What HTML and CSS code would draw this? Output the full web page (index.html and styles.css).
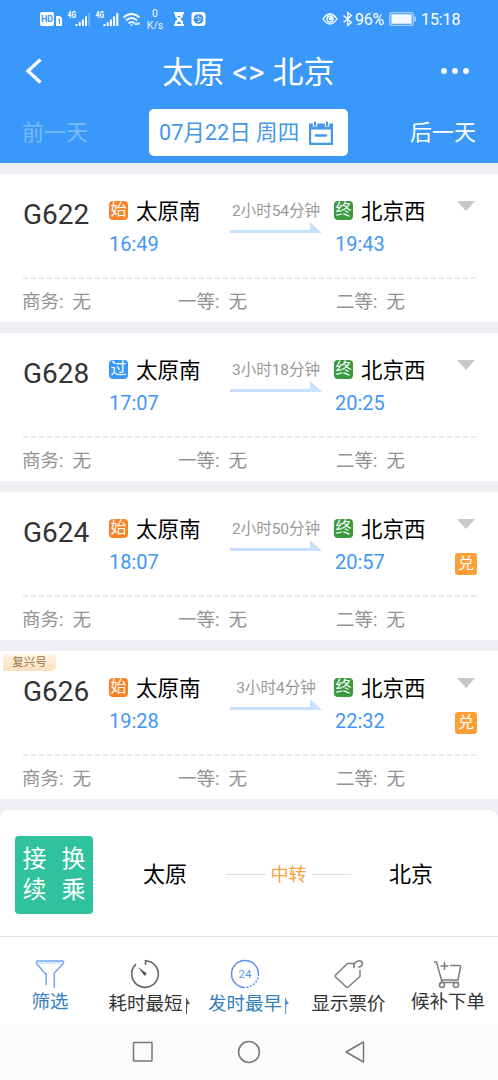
FILE: index.html
```
<!DOCTYPE html>
<html lang="zh-CN">
<head>
<meta charset="utf-8">
<title>太原 - 北京</title>
<link rel="stylesheet" href="styles.css">
</head>
<body>
<header class="top">
  <div class="status">
    <svg class="status-icons" width="108" height="24" viewBox="0 0 108 24" fill="#fff">
      <rect x="0" y="5" width="14" height="14" rx="2"/>
      <text x="1" y="15.3" class="hd-label">HD</text>
      <path d="M16 9h4l2 2v8h-6zM18 12v1h1v4h1v-5z" fill-rule="evenodd"/>
      <text x="27.500" y="11" class="net-label" textLength="8.500" lengthAdjust="spacingAndGlyphs">4G</text>
      <path d="M35.500 17h2v2h-2zM38.700 15h2v4h-2zM41.900 12.500h2v6.500h-2zM45 9.500h2v9.500h-2z"/>
      <path d="M48.300 6h1.500v13h-1.500z" opacity=".35"/>
      <text x="55.500" y="11" class="net-label" textLength="8.500" lengthAdjust="spacingAndGlyphs">4G</text>
      <path d="M63.500 17h2v2h-2zM66.700 15h2v4h-2zM69.900 12.500h2v6.500h-2zM73.100 9.500h2v9.500h-2zM76.300 6h2v13h-2z"/>
      <g fill="none" stroke="#fff" stroke-width="1.700"><path d="M83.500 10.500q8-7 16 0M86 13.500q5.500-5 11 0M88.500 16.300q3-2.500 6 0"/></g>
      <path d="M90 17.500h3l-1.500 1.800zM94.500 18l1.500-3 1.500 3zM97 15.500h3l-1.500 3z"/>
    </svg>
    <div class="speed"><span>0</span><span>K/s</span></div>
    <svg class="status-apps" width="34" height="16" viewBox="0 0 34 16" fill="#fff">
      <path d="M1 1h10v2h-1v2.500L7.500 8 10 10.500V13h1v2H1v-2h1v-2.500L4.500 8 2 5.500V3H1z"/>
      <path d="M4 5h4L6 7zM3.500 13 6 10l2.500 3z" fill="#3b98fb"/>
      <rect x="18.500" y="1" width="14" height="14" rx="3"/>
      <circle cx="25.500" cy="8" r="4.800" fill="#2f86e8"/>
      <path d="M21.500 7.500q4-3 7.500-.5M23.500 11q4 0 5-3.500M25.500 4q-1 4 1.500 7" fill="none" stroke="#fff" stroke-width=".7"/>
    </svg>
    <svg class="eye" width="32" height="16" viewBox="0 0 32 16" fill="none" stroke="#fff" stroke-width="1.300">
      <path d="M1 8q7-10 14 0-7 10-14 0z"/><circle cx="8" cy="8" r="3"/><circle cx="8.500" cy="7.500" r="1.200" fill="#fff"/>
      <path d="m21.500 4.500 8 7-3.700 3V1.500l3.700 3-8 7"/>
    </svg>
    <span class="percent">96%</span>
    <svg class="battery" width="27" height="14" viewBox="0 0 27 14">
      <rect x=".7" y=".7" width="23.600" height="12.600" rx="2" fill="none" stroke="#a9d2fd" stroke-width="1.300"/>
      <rect x="2.300" y="2.300" width="20.400" height="9.400" rx="1" fill="#f1f8ff"/><path d="M25.500 4.500h1.200v5h-1.200z" fill="#d9ebff"/>
    </svg>
    <span class="clock">15:18</span>
  </div>
  <div class="titlebar">
    <svg class="back" width="18" height="26" viewBox="0 0 18 26"><path d="M15.500 1.500 3 13l12.500 11.500" fill="none" stroke="#fff" stroke-width="3.200"/></svg>
    <h1 class="title">太原 &lt;&gt; 北京</h1>
    <svg class="more" width="30" height="8" viewBox="0 0 30 8" fill="#fff"><circle cx="4" cy="4" r="2.900"/><circle cx="15" cy="4" r="2.900"/><circle cx="26" cy="4" r="2.900"/></svg>
  </div>
  <div class="days">
    <span class="prev">前一天</span>
    <div class="date"><span>07月22日 周四</span>
      <svg class="calendar" width="24" height="24" viewBox="0 0 24 24"><path d="M0 2.500h24V24H0zM2.200 8.500v13.200h19.600V8.500z" fill="#4398e9" fill-rule="evenodd"/><path d="M6 0v5.500M18 0v5.500" stroke="#fff" stroke-width="4.400"/><path d="M6 .5V5M18 .5V5" stroke="#4398e9" stroke-width="2"/><path d="M7 14.500h10" stroke="#4398e9" stroke-width="2.400" stroke-linecap="round"/></svg>
    </div>
    <span class="next">后一天</span>
  </div>
</header>

<main class="list">
  <article class="card">
    <div class="trip">
      <div class="number">G622</div>
      <div class="stop"><div class="station"><i class="badge start">始</i>太原南</div><time>16:49</time></div>
      <div class="span"><span>2小时54分钟</span><svg class="arrow" width="92" height="12" viewBox="0 0 92 12"><path d="M0 8h80V0l12 11H0z"/></svg></div>
      <div class="stop"><div class="station"><i class="badge end">终</i>北京西</div><time>19:43</time></div>
      <div class="side"><i class="caret"></i></div>
    </div>
    <svg class="dashes" width="453" height="2"><path d="M0 1h453"/></svg>
    <div class="seats"><span>商务:<b>无</b></span><span>一等:<b>无</b></span><span>二等:<b>无</b></span></div>
  </article>
  <article class="card">
    <div class="trip">
      <div class="number">G628</div>
      <div class="stop"><div class="station"><i class="badge pass">过</i>太原南</div><time>17:07</time></div>
      <div class="span"><span>3小时18分钟</span><svg class="arrow" width="92" height="12" viewBox="0 0 92 12"><path d="M0 8h80V0l12 11H0z"/></svg></div>
      <div class="stop"><div class="station"><i class="badge end">终</i>北京西</div><time>20:25</time></div>
      <div class="side"><i class="caret"></i></div>
    </div>
    <svg class="dashes" width="453" height="2"><path d="M0 1h453"/></svg>
    <div class="seats"><span>商务:<b>无</b></span><span>一等:<b>无</b></span><span>二等:<b>无</b></span></div>
  </article>
  <article class="card">
    <div class="trip">
      <div class="number">G624</div>
      <div class="stop"><div class="station"><i class="badge start">始</i>太原南</div><time>18:07</time></div>
      <div class="span"><span>2小时50分钟</span><svg class="arrow" width="92" height="12" viewBox="0 0 92 12"><path d="M0 8h80V0l12 11H0z"/></svg></div>
      <div class="stop"><div class="station"><i class="badge end">终</i>北京西</div><time>20:57</time></div>
      <div class="side"><i class="caret"></i><i class="redeem">兑</i></div>
    </div>
    <svg class="dashes" width="453" height="2"><path d="M0 1h453"/></svg>
    <div class="seats"><span>商务:<b>无</b></span><span>一等:<b>无</b></span><span>二等:<b>无</b></span></div>
  </article>
  <article class="card">
    <span class="fuxing">复兴号</span>
    <div class="trip">
      <div class="number">G626</div>
      <div class="stop"><div class="station"><i class="badge start">始</i>太原南</div><time>19:28</time></div>
      <div class="span"><span>3小时4分钟</span><svg class="arrow" width="92" height="12" viewBox="0 0 92 12"><path d="M0 8h80V0l12 11H0z"/></svg></div>
      <div class="stop"><div class="station"><i class="badge end">终</i>北京西</div><time>22:32</time></div>
      <div class="side"><i class="caret"></i><i class="redeem">兑</i></div>
    </div>
    <svg class="dashes" width="453" height="2"><path d="M0 1h453"/></svg>
    <div class="seats"><span>商务:<b>无</b></span><span>一等:<b>无</b></span><span>二等:<b>无</b></span></div>
  </article>
  <article class="transfer">
    <div class="transfer-logo"><span>接</span><span>换</span><span>续</span><span>乘</span></div>
    <span class="city from">太原</span>
    <div class="via"><span>中转</span></div>
    <span class="city">北京</span>
  </article>
</main>

<footer class="tools">
  <div class="tool raised active"><svg width="30" height="30" viewBox="0 0 30 30" fill="none" stroke="#72a6f4" stroke-width="1.500" stroke-linejoin="round"><path d="M11.200 26V14.500H10L1.700 4.500Q.5 2 3 2h24q2.500 0 1.300 2.500L19.300 14V29"/><path d="M3 4h24" opacity=".35"/></svg><span>筛选</span></div>
  <div class="tool sorted"><svg width="30" height="30" viewBox="0 0 30 30" fill="none" stroke="#65656d" stroke-width="1.600"><path d="M15.500 6V1.700A13.300 13.300 0 1 1 6 5.200"/><path d="m8 8 5.500 7.500a1.500 1.500 0 1 0 2-2z" fill="#55555b" stroke="none"/></svg><span>耗时最短<svg class="sort" width="6" height="17" viewBox="0 0 6 17"><path d="M1.500 17V1L5 7H2.500z" fill="#555"/><path d="M1.500 17V1" stroke="#555"/></svg></span></div>
  <div class="tool sorted active"><svg width="30" height="30" viewBox="0 0 30 30" fill="none" stroke="#5f92ed" stroke-width="1.500"><path d="M15 28.500A13.500 13.500 0 1 1 28.500 15"/><path d="M28.500 15A13.500 13.500 0 0 1 15 28.500" stroke-dasharray="2 1.500"/><text x="15" y="19" class="hours">24</text></svg><span>发时最早<svg class="sort" width="6" height="17" viewBox="0 0 6 17"><path d="M1.500 17V1L5 7H2.500z" fill="#4a97e8"/><path d="M1.500 17V1" stroke="#4a97e8"/></svg></span></div>
  <div class="tool"><svg width="30" height="30" viewBox="0 0 30 30" fill="none" stroke="#7c7c82" stroke-width="1.500" stroke-linejoin="round"><path d="M20 4.500h-6.500L1.700 16q-.8 1 0 2l10.500 10q1 .8 2 0L26 17.500V11"/><path d="M20 9q-1-3 1.500-5.500t5-1.500q3 1.500 1.500 4t-4 2"/></svg><span>显示票价</span></div>
  <div class="tool raised"><svg width="30" height="30" viewBox="0 0 30 30" fill="none" stroke="#7c7c82" stroke-width="1.500"><path d="M1 3h2.500L8.500 21H25l2.500-12.500q.5-2-1.500-2h-9M11.500 3v8M7.500 7h8M9 21l-1 3M9 23.500h17"/><circle cx="9" cy="26" r="2.500" fill="#fff"/><circle cx="23" cy="26" r="2.500" fill="#fff"/></svg><span>候补下单</span></div>
</footer>

<nav class="system">
  <svg width="24" height="24" viewBox="0 0 24 24"><rect x="2.500" y="2.500" width="18.500" height="18.500" rx=".5"/></svg>
  <svg width="24" height="24" viewBox="0 0 24 24"><circle cx="12" cy="12" r="10.400"/></svg>
  <svg width="24" height="24" viewBox="0 0 24 24"><path d="M20.500 2v20L3 12z"/></svg>
</nav>
</body>
</html>
```

FILE: styles.css
```
* { box-sizing: border-box; }
body {
  margin: 0;
  width: 498px;
  height: 1080px;
  overflow: hidden;
  background: #eeeef3;
  font-family: Roboto, "Noto Sans CJK SC", sans-serif;
  color: #111;
}
svg { display: block; flex: none; }
i, b { font-style: normal; font-weight: 400; }

.top { height: 163px; background: #3b98fb; color: #fff; }
.status { display: flex; align-items: center; height: 38px; padding-left: 40px; line-height: 1; }
.status-icons { margin-top: 0; }
.hd-label { font-size: 9px; font-weight: 700; fill: #3b98fb; }
.net-label { font-size: 8.500px; font-weight: 700; }
.speed { display: flex; flex-direction: column; align-items: center; width: 20px; margin: 1px 0 0 -3px; font-size: 10.500px; line-height: 12px; opacity: .9; }
.status-apps { margin-left: 8px; }
.eye { margin-left: 115px; }
.percent { width: 34px; margin: 2px 0 0 1px; font-size: 16px; letter-spacing: -.3px; }
.battery { margin-left: 0; }
.clock { margin: 2px 0 0 5px; font-size: 16px; letter-spacing: -.1px; }
.titlebar { display: flex; align-items: center; height: 66px; padding: 0 28px 0 25px; }
.title { flex: 1; margin: 0; padding: 3px 0 0 14px; text-align: center; font-size: 31px; line-height: 40px; font-weight: 400; letter-spacing: .15px; }
.days { display: grid; grid-template-columns: 127px 199px 84px; align-items: center; height: 57px; padding-left: 22px; font-size: 22px; line-height: 28px; }
.prev { color: #7abafa; }
.next { padding-left: 62px; white-space: nowrap; }
.date { display: flex; align-items: center; justify-content: space-between; height: 47px; padding: 0 15px 0 10px; border-radius: 5px; background: #fff; color: #4398e9; font-size: 21.600px; white-space: nowrap; }

.list { display: flex; flex-direction: column; gap: 11px; padding-top: 11px; }
.card { position: relative; height: 148px; padding: 23px 22px 0 23px; background: #fff; }
.trip { display: grid; grid-template-columns: 86px 121px 104px 122px 20px; height: 80px; }
.number { padding: 2px 0 0; font-size: 28px; line-height: 32px; color: #333; }
.station { display: flex; align-items: center; gap: 8px; height: 28px; padding-top: 1px; font-size: 21.500px; line-height: 28px; white-space: nowrap; color: #000; }
.badge { display: flex; align-items: center; justify-content: center; width: 19px; height: 19px; margin-bottom: 3px; border-radius: 4px; color: #fff; font-size: 16px; line-height: 18px; }
.start { background: #fa8325; }
.pass { background: #3b98fb; }
.end { background: #38993f; }
.stop time { display: block; padding: 7px 0 0; font-size: 20px; line-height: 24px; color: #4297f5; }
.stop + .span + .stop time { padding-left: 1px; }
.span { display: flex; flex-direction: column; align-items: center; width: 92px; padding-top: 4px; font-size: 15.500px; line-height: 21px; color: #999; white-space: nowrap; }
.arrow { fill: #c7e0fd; }
.side { display: flex; flex-direction: column; align-items: center; padding-top: 4px; }
.caret { width: 18px; height: 10px; background: #c8c8c8; clip-path: polygon(0 0, 100% 0, 50% 100%); }
.redeem { width: 22px; height: 22px; margin-top: 24px; border-radius: 3px; background: #fe9e37; color: #fff; text-align: center; font-size: 16px; line-height: 21px; }
.dashes path { stroke: #e4e4e4; stroke-width: 1.300; stroke-dasharray: 5 3; }
.seats { display: grid; grid-template-columns: 156px 158px 1fr; margin-left: -1px; padding-top: 11px; font-size: 18.500px; line-height: 25px; color: #929292; }
.seats b { margin-left: 9px; }
.fuxing { position: absolute; left: 3px; top: 3px; width: 53px; height: 17px; border-radius: 5px 0 5px 0; background: linear-gradient(#fff4e5, #fbdfba); text-align: center; font-size: 11.500px; line-height: 17px; color: #997344; }

.transfer { display: grid; grid-template-columns: 128px 83px 125px 1fr; align-items: center; height: 127px; padding-left: 15px; border-radius: 8px 8px 0 0; background: #fff; border-bottom: 1px solid #e3e3e5; }
.transfer-logo { display: grid; grid-template-columns: 39px 39px; grid-template-rows: 31px 31px; width: 78px; height: 78px; padding-top: 8px; margin-top: 4px; border-radius: 4px; background: #30c29c; color: #fff; font-size: 24px; line-height: 31px; text-align: center; }
.city { padding: 4px 0 0 38px; font-size: 22px; line-height: 28px; color: #000; }
.city.from { padding-left: 0; }
.via { display: flex; align-items: center; gap: 5px; padding-top: 3px; color: #f9a145; font-size: 18px; line-height: 26px; white-space: nowrap; }
.via::before, .via::after { content: ""; flex: 1; height: 1px; background: #dfdfdf; }

.tools { display: grid; grid-template-columns: 100px 99px 100px 99px 100px; height: 88px; background: #fff; }
.tool { display: flex; flex-direction: column; align-items: center; padding-top: 22px; font-size: 18.500px; line-height: 26px; color: #333; white-space: nowrap; }
.tool span { display: flex; align-items: center; gap: 2px; margin-top: 2px; }
.tool.sorted > svg { margin-right: 9px; }
.tool.raised span { margin-top: 0; }
.sort { margin-top: 2px; }
.tool.active { color: #3580bc; }
.hours { fill: #5f92ed; stroke: none; font-size: 11.500px; text-anchor: middle; }
.system { display: flex; gap: 82px; height: 55px; padding: 15px 0 0 131px; background: #fbfbfb; }
.system svg { fill: none; stroke: #777; stroke-width: 1.500; stroke-linejoin: round; }
```
